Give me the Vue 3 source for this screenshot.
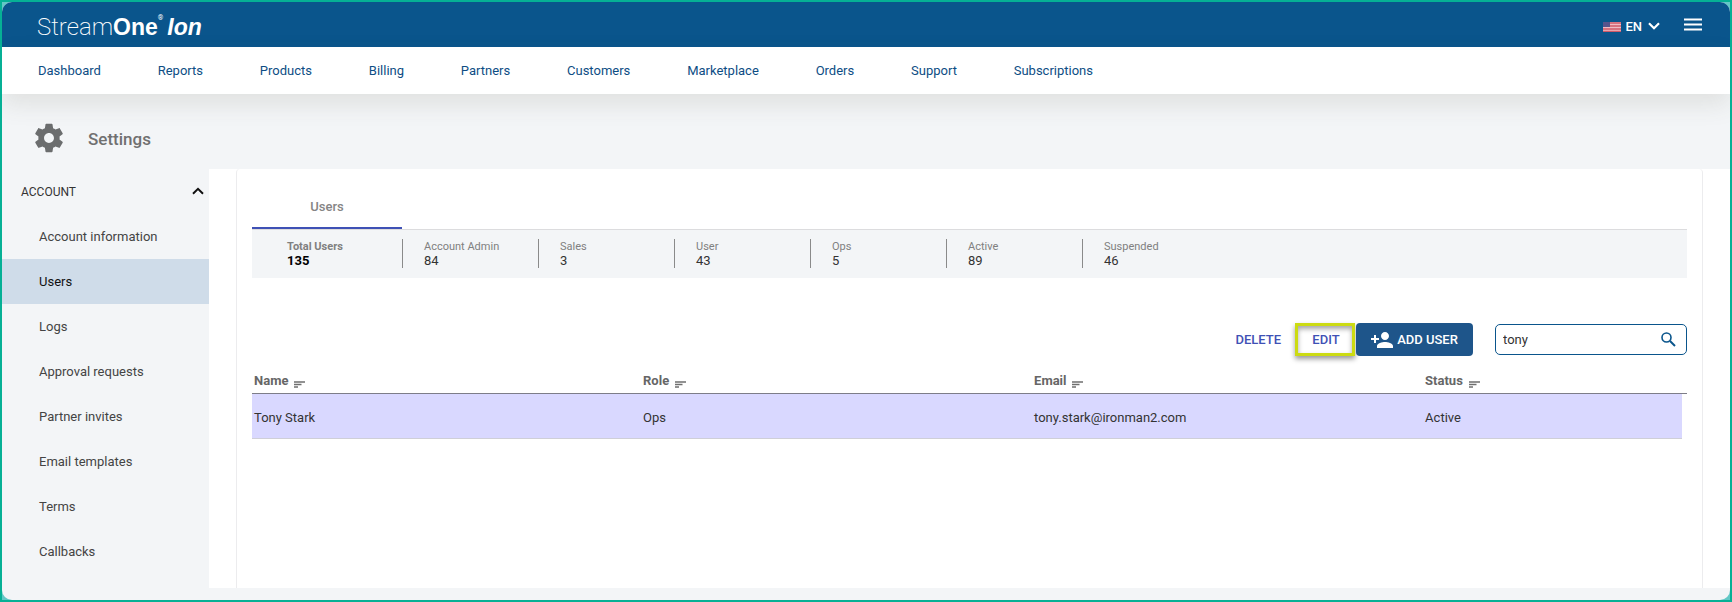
<script setup>
import { ref } from 'vue'

const nav = ['Dashboard', 'Reports', 'Products', 'Billing', 'Partners', 'Customers', 'Marketplace', 'Orders', 'Support', 'Subscriptions']
const side = ['Account information', 'Users', 'Logs', 'Approval requests', 'Partner invites', 'Email templates', 'Terms', 'Callbacks']
const stats = [
  ['Total Users', 135],
  ['Account Admin', 84],
  ['Sales', 3],
  ['User', 43],
  ['Ops', 5],
  ['Active', 89],
  ['Suspended', 46],
]
const columns = ['Name', 'Role', 'Email', 'Status']
const rows = [['Tony Stark', 'Ops', 'tony.stark@ironman2.com', 'Active']]
const query = ref('tony')
</script>

<template>
  <div class="frame">
    <div class="page">
      <header class="topbar">
        <a class="logo" href="#"><span class="thin">Stream</span><span class="bold">One</span><sup>®</sup><span class="ital">Ion</span></a>
        <div class="tools">
          <button class="lang" type="button">
            <svg class="flag" viewBox="0 0 18 10" width="18" height="10" aria-hidden="true">
              <rect width="18" height="10" fill="#f0bcc4" />
              <path d="M0 1h18M0 4h18M0 7h18M0 9.500h18" stroke="#cf5a68" stroke-width="1.400" />
              <rect width="7" height="5" fill="#58548c" />
            </svg>
            <span>EN</span>
            <svg viewBox="0 0 12 10" width="12" height="10" aria-hidden="true"><path d="M1 1.200l5 5 5-5" fill="none" stroke="#fff" stroke-width="2.200" /></svg>
          </button>
          <button class="menu" type="button" aria-label="Menu">
            <svg viewBox="0 0 18 13" width="18" height="13" aria-hidden="true"><path d="M0 1.500h18M0 6.500h18M0 11.500h18" stroke="#fff" stroke-width="2.200" /></svg>
          </button>
        </div>
      </header>
      <nav class="nav">
        <div class="links">
          <a v-for="n in nav" :key="n" href="#">{{ n }}</a>
        </div>
      </nav>
      <div class="heading">
        <svg viewBox="0 0 24 24" width="34" height="34" aria-hidden="true"><path fill="#6b6d6e" d="M19.430 12.980c.04-.32.07-.64.07-.98s-.03-.66-.07-.98l2.110-1.650c.19-.15.24-.42.12-.64l-2-3.460c-.12-.22-.39-.3-.61-.22l-2.490 1c-.52-.4-1.080-.73-1.690-.98l-.38-2.650C14.460 2.180 14.250 2 14 2h-4c-.25 0-.46.18-.49.42l-.38 2.650c-.61.25-1.170.59-1.690.98l-2.490-1c-.23-.09-.49 0-.61.22l-2 3.460c-.13.22-.07.49.12.64l2.110 1.650c-.04.32-.07.65-.07.98s.03.66.07.98l-2.110 1.650c-.19.15-.24.42-.12.64l2 3.460c.12.22.39.3.61.22l2.490-1c.52.4 1.080.73 1.690.98l.38 2.650c.03.24.24.42.49.42h4c.25 0 .46-.18.49-.42l.38-2.650c.61-.25 1.170-.59 1.690-.98l2.490 1c.23.09.49 0 .61-.22l2-3.460c.12-.22.07-.49-.12-.64l-2.110-1.650zM12 15.500c-1.930 0-3.500-1.570-3.500-3.500s1.570-3.500 3.500-3.500 3.500 1.570 3.500 3.500-1.570 3.500-3.500 3.500z" /></svg>
        <h1>Settings</h1>
      </div>
      <div class="body">
        <aside class="side">
          <button class="group" type="button" aria-expanded="true">
            <span>ACCOUNT</span>
            <svg viewBox="0 0 12 10" width="12" height="10" aria-hidden="true"><path d="M1 6.800l5-5 5 5" fill="none" stroke="#111" stroke-width="2" /></svg>
          </button>
          <a v-for="s in side" :key="s" href="#" :class="{ on: s === 'Users' }">{{ s }}</a>
        </aside>
        <main class="content">
          <section class="panel">
            <div class="tabs"><button class="tab" type="button">Users</button></div>
            <dl class="stats">
              <div v-for="[label, value] in stats" :key="label">
                <dt>{{ label }}</dt>
                <dd>{{ value }}</dd>
              </div>
            </dl>
            <div class="actions">
              <button class="flat" type="button">DELETE</button>
              <div class="spot"><button class="flat" type="button">EDIT</button></div>
              <button class="add" type="button">
                <svg viewBox="1 4 22 16" width="22" height="16" aria-hidden="true"><path fill="#fff" d="M15 12c2.210 0 4-1.790 4-4s-1.790-4-4-4-4 1.790-4 4 1.790 4 4 4zm-9-2V7H4v3H1v2h3v3h2v-3h3v-2H6zm9 4c-2.670 0-8 1.340-8 4v2h16v-2c0-2.660-5.330-4-8-4z" /></svg>
                <span>ADD USER</span>
              </button>
              <div class="search">
                <input v-model="query" type="text" aria-label="Search users">
                <svg viewBox="0 0 15 15" width="15" height="15" aria-hidden="true"><circle cx="5.500" cy="5.500" r="4.500" fill="none" stroke="#0a558c" stroke-width="1.600" /><path d="M9 9l5 5" stroke="#0a558c" stroke-width="2" /></svg>
              </div>
            </div>
            <table>
              <colgroup>
                <col class="wide"><col class="wide"><col class="wide"><col><col class="gutter">
              </colgroup>
              <thead>
                <tr>
                  <th v-for="c in columns" :key="c" scope="col">
                    <span class="th">{{ c }}<svg viewBox="0 0 11 7" width="11" height="7" aria-hidden="true"><path d="M0 1h11M0 3.500h7.500M0 6h4" stroke="#6f6f6f" stroke-width="1.300" /></svg></span>
                  </th>
                  <td></td>
                </tr>
              </thead>
              <tbody>
                <tr v-for="r in rows" :key="r[0]">
                  <td v-for="v in r" :key="v">{{ v }}</td>
                  <td class="end"></td>
                </tr>
              </tbody>
            </table>
          </section>
        </main>
      </div>
    </div>
  </div>
</template>

<style>
body { margin: 0; }
</style>

<style scoped>
* { box-sizing: border-box; }
.frame {
  min-height: 100vh;
  display: flex;
  border: 2px solid #06b095;
  background: #62c8c6;
  font: 13px/16px Roboto, sans-serif;
  color: #333;
}
.page {
  flex: 1;
  min-width: 0;
  display: flex;
  flex-direction: column;
  border-radius: 10px;
  overflow: hidden;
  background: #f3f5f7;
}
a { text-decoration: none; }
button { border: 0; background: none; padding: 0; font: inherit; color: inherit; cursor: pointer; }
svg { display: block; flex: none; }
.topbar {
  height: 45px;
  padding: 0 28px 0 35px;
  display: flex;
  align-items: center;
  justify-content: space-between;
  background: #0a558c;
  color: #fff;
}
.logo { display: flex; align-items: center; color: #fff; font-size: 23px; line-height: 28px; padding-top: 5px; }
.thin { font-size: 24px; font-weight: 200; }
.bold, .ital { font-family: "Liberation Sans", Arial, sans-serif; font-weight: 700; }
.ital { font-style: italic; margin-left: 4px; }
sup { font-size: 7px; line-height: 8px; align-self: flex-start; padding-top: 1px; }
.tools { display: flex; align-items: center; gap: 24px; }
.lang { display: flex; align-items: center; gap: 4px; font-weight: 500; padding-top: 4px; }
.lang span { margin-right: 2px; }
.nav {
  position: relative;
  height: 47px;
  padding: 0 36px;
  display: flex;
  align-items: center;
  background: #fff;
  box-shadow: 0 10px 24px rgba(80, 80, 60, 0.12);
}
.links { flex: 1; max-width: 1055px; display: flex; justify-content: space-between; }
.nav a { color: #0d4d84; }
.heading { height: 75px; padding: 12px 30px 0; display: flex; align-items: center; gap: 22px; }
h1 { margin: 0; font-size: 17px; line-height: 20px; font-weight: 500; color: #707070; padding-top: 3px; }
.body { flex: 1; display: flex; }
.side { width: 207px; flex: none; display: flex; flex-direction: column; }
.side a { height: 45px; padding-left: 37px; display: flex; align-items: center; color: #444; }
.side a.on { background: #cfdce9; color: #111; }
.group { height: 45px; padding: 0 5px 0 19px; display: flex; align-items: center; justify-content: space-between; font-size: 12px; color: #333; }
.content { flex: 1; min-width: 0; display: flex; margin-bottom: 12px; padding: 0 27px; background: #fff; }
.panel {
  flex: 1;
  min-width: 0;
  padding: 13px 15px;
  border: solid #ececee;
  border-width: 0 1px;
  border-radius: 4px 4px 0 0;
}
.tabs { display: flex; border-bottom: 1px solid #dcdcde; }
.tab { width: 150px; height: 47px; padding-top: 4px; border-bottom: 2px solid #3f51b5; font-weight: 500; color: #858585; }
.stats { margin: 0; height: 48px; padding-top: 9px; display: flex; background: #f3f5f7; }
.stats div { width: 136px; height: 29px; padding-left: 21px; border-left: 1px solid #8a8a8a; }
.stats div:first-child { width: 150px; padding-left: 35px; border-left: 0; font-weight: 700; }
dt { font-size: 11px; line-height: 16px; color: #808080; }
dd { margin: 0; line-height: 12px; color: #333; }
.stats div:first-child dd { color: #000; }
.actions { display: flex; align-items: center; justify-content: flex-end; margin-top: 45px; height: 33px; }
.flat { font-weight: 500; color: #3f51b5; }
.spot {
  margin: 0 1px 0 14px;
  width: 60px;
  height: 33px;
  padding-left: 2px;
  display: grid;
  place-items: center;
  border: 3px solid #ccdb12;
  box-shadow: 0 3px 5px rgba(0, 0, 0, 0.4), inset 0 3px 5px rgba(0, 0, 0, 0.35);
}
.add { height: 33px; width: 117px; display: flex; align-items: center; justify-content: center; gap: 4px; border-radius: 4px; background: #1e558a; color: #fff; font-weight: 500; }
.search { margin-left: 22px; width: 192px; height: 31px; padding: 0 10px 0 7px; display: flex; align-items: center; border: 1px solid #0a558c; border-radius: 5px; }
.search input { flex: 1; min-width: 0; border: 0; outline: 0; padding: 0; background: none; font: inherit; color: #333; }
table { width: 100%; margin-top: 12px; table-layout: fixed; border-collapse: separate; border-spacing: 0; }
.wide { width: 27.25%; }
.gutter { width: 5px; }
thead th, thead td { height: 26px; padding: 0; border-bottom: 1px solid #7d7d88; text-align: left; font-weight: 700; color: #666; }
.th { display: flex; align-items: center; gap: 6px; }
.th svg { margin-top: 8px; }
tbody td { height: 45px; padding: 3px 0 0; border-bottom: 1px solid #cfcfd8; background: #d9d8ff; color: #333; }
th:first-child, tbody td:first-child { padding-left: 2px; }
tbody td.end { background: none; border-bottom: 0; }
</style>
